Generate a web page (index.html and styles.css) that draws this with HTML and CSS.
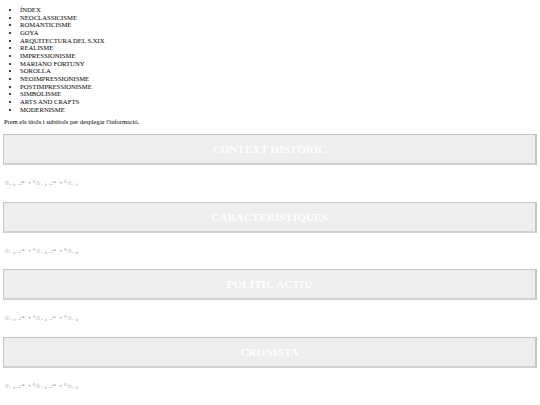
FILE: index.html
```html
<!DOCTYPE html>
<html lang="ca">
<head>
<meta charset="utf-8">
<title>Art</title>
<link rel="stylesheet" href="styles.css">
</head>
<body>
<ul class="menu">
  <li>ÍNDEX</li>
  <li>NEOCLASSICISME</li>
  <li>ROMANTICISME</li>
  <li>GOYA</li>
  <li>ARQUITECTURA DEL S.XIX</li>
  <li>REALISME</li>
  <li>IMPRESSIONISME</li>
  <li>MARIANO FORTUNY</li>
  <li>SOROLLA</li>
  <li>NEOIMPRESSIONISME</li>
  <li>POSTIMPRESSIONISME</li>
  <li>SIMBOLISME</li>
  <li>ARTS AND CRAFTS</li>
  <li>MODERNISME</li>
</ul>
<p class="intro">Prem els títols i subtítols per desplegar l'informació.</p>
<section class="block">
  <button class="toggle">CONTEXT HISTÒRIC</button>
  <p class="deco">☆. ｡ .:* ・°☆. ｡ .:* ・°☆. ｡</p>
</section>
<section class="block">
  <button class="toggle">CARACTERÍSTIQUES</button>
  <p class="deco">☆. ｡ .:* ・°☆. ｡ .:* ・°☆. ｡</p>
</section>
<section class="block">
  <button class="toggle">POLÍTIC ACTIU</button>
  <p class="deco">☆. ｡ .:* ・°☆. ｡ .:* ・°☆. ｡</p>
</section>
<section class="block">
  <button class="toggle">CRONISTA</button>
  <p class="deco">☆. ｡ .:* ・°☆. ｡ .:* ・°☆. ｡</p>
</section>
</body>
</html>
```
FILE: styles.css
```css
html, body {
  margin: 0;
  padding: 0;
  background: #fff;
}
body {
  padding: 0 3px;
  font-family: "Liberation Serif", "Times New Roman", serif;
  color: #000;
}
.menu {
  margin: 6px 0 5px;
  padding-left: 17px;
  font-size: 6.67px;
  line-height: 7.67px;
}
.intro {
  margin: 0 0 8px 1px;
  font-size: 6.5px;
  line-height: 8px;
}
.block {
  display: flex;
  flex-direction: column;
}
.toggle {
  display: block;
  width: 534px;
  height: 31px;
  box-sizing: border-box;
  margin: 0;
  padding: 0;
  background: #eeeeee;
  border: 1px solid #c4c4c4;
  border-bottom: 2px solid #d0d0d0;
  border-right: 2px solid #c4c4c4;
  color: #fff;
  font-family: "Liberation Serif", "Times New Roman", serif;
  font-weight: bold;
  font-size: 11.2px;
  text-align: center;
}
.deco {
  margin: 14px 0 14.5px 1px;
  font-family: "Liberation Serif", "DejaVu Sans", "Noto Sans CJK JP", serif;
  font-size: 6.5px;
  line-height: 8px;
  color: #8a8a8a;
  white-space: nowrap;
}
```
